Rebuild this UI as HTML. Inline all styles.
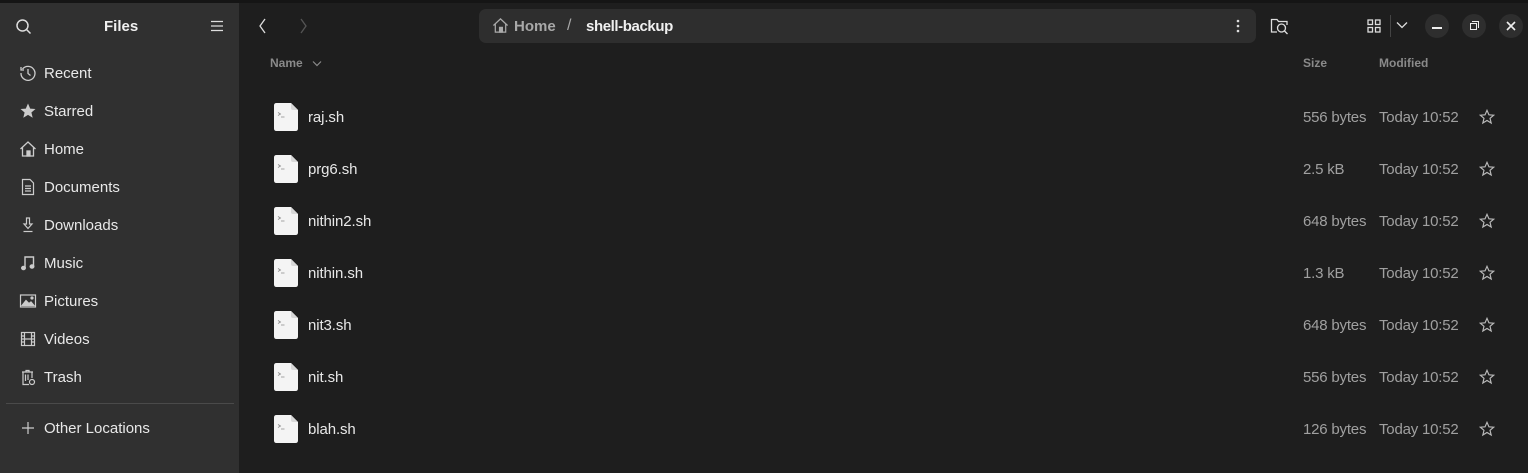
<!DOCTYPE html>
<html><head><meta charset="utf-8"><style>
*{margin:0;padding:0;box-sizing:border-box}
body{width:1528px;height:473px;overflow:hidden;background:#1e1e1e;font-family:"Liberation Sans",sans-serif;color:#fff;position:relative}
.top{position:absolute;left:0;top:0;width:1528px;height:3px;background:#151515}
.side{position:absolute;left:0;top:3px;width:239px;height:470px;background:#303030}
.abs{position:absolute}
.t{margin-top:1px}
.si{position:absolute;left:44px;font-size:15px;color:#e8e8e8;line-height:18px;margin-top:1px}
.ic{position:absolute;left:19px;width:18px;height:18px}
.row .name{position:absolute;left:308px;font-size:15px;color:#e8e8e8;letter-spacing:-0.1px}
.sz{position:absolute;left:1303px;font-size:15px;color:#a0a0a0;letter-spacing:-0.2px}
.md{position:absolute;left:1379px;font-size:15px;color:#a0a0a0;letter-spacing:-0.2px}
.fi{position:absolute;left:274px;width:24px;height:28px}
.st{position:absolute;left:1479px;width:16px;height:16px}
.wb{position:absolute;top:14px;width:24px;height:24px;border-radius:50%;background:#2e2e2e}
</style></head><body>
<div class="top"></div>
<div class="side"></div>
<svg class="abs" style="left:15px;top:18px" width="18" height="18" viewBox="0 0 18 18" fill="none" stroke="#ddd" stroke-width="1.5"><circle cx="7.5" cy="7.5" r="5.5"/><path d="M11.5 11.5L15.5 15.5"/></svg>
<div class="abs t" style="left:104px;top:17px;font-size:15px;font-weight:bold;color:#f0f0f0">Files</div>
<svg class="abs" style="left:210px;top:19px" width="14" height="14" viewBox="0 0 14 14" stroke="#ddd" stroke-width="1.3"><path d="M1 2.5H13M1 7H13M1 11.5H13"/></svg>

<svg class="ic" style="top:64px" viewBox="0 0 18 18" fill="none" stroke="#ccc" stroke-width="1.3"><path d="M3.5 5A7 7 0 1 1 2 9"/><path d="M2 3V6H5"/><path d="M9 5V9.5L11.5 11.5"/></svg>
<div class="si" style="top:64px">Recent</div>
<svg class="ic" style="top:102px" viewBox="0 0 18 18" fill="#ccc"><path d="M9 1.5L11.2 6.6 16.5 7 12.4 10.5 13.7 15.8 9 12.9 4.3 15.8 5.6 10.5 1.5 7 6.8 6.6Z"/></svg>
<div class="si" style="top:102px">Starred</div>
<svg class="ic" style="top:140px" viewBox="0 0 18 18" fill="none" stroke="#ccc" stroke-width="1.3"><path d="M1.5 9L9 2 16.5 9M3.5 7.5V16H14.5V7.5"/><rect x="8" y="11" width="3" height="5" fill="#ccc"/></svg>
<div class="si" style="top:140px">Home</div>
<svg class="ic" style="top:178px" viewBox="0 0 18 18" fill="none" stroke="#ccc" stroke-width="1.2"><path d="M3.5 1.5H11L14.5 5V16.5H3.5Z"/><path d="M6 8H12M6 10.5H12M6 13H12"/></svg>
<div class="si" style="top:178px">Documents</div>
<svg class="ic" style="top:216px" viewBox="0 0 18 18" fill="none" stroke="#ccc" stroke-width="1.2"><path d="M7.5 2H10.5V8H13L9 12.5 5 8H7.5Z"/><path d="M4.5 15.5H13.5"/></svg>
<div class="si" style="top:216px">Downloads</div>
<svg class="ic" style="top:254px" viewBox="0 0 18 18" fill="none" stroke="#ccc" stroke-width="1.4"><path d="M6 14V3H14.5V12"/><ellipse cx="4.5" cy="14" rx="1.8" ry="1.5" fill="#ccc"/><ellipse cx="13" cy="12.5" rx="1.8" ry="1.5" fill="#ccc"/></svg>
<div class="si" style="top:254px">Music</div>
<svg class="ic" style="top:292px" viewBox="0 0 18 18" fill="none" stroke="#ccc" stroke-width="1.2"><rect x="1.5" y="3" width="15" height="12"/><path d="M3 13.5L7 8.5 10 11.5 12 10 15 13.5Z" fill="#ccc"/><circle cx="13" cy="6" r="1" fill="#ccc"/></svg>
<div class="si" style="top:292px">Pictures</div>
<svg class="ic" style="top:330px" viewBox="0 0 18 18" fill="none" stroke="#ccc" stroke-width="1.2"><rect x="2.5" y="2.5" width="13" height="13"/><path d="M5.5 2.5V15.5M12.5 2.5V15.5M2.5 6H5.5M2.5 9H5.5M2.5 12H5.5M12.5 6H15.5M12.5 9H15.5M12.5 12H15.5M5.5 9H12.5"/></svg>
<div class="si" style="top:330px">Videos</div>
<svg class="ic" style="top:368px" viewBox="0 0 18 18" fill="none" stroke="#ccc" stroke-width="1.2"><path d="M3 4H14M7 4V2.5H10V4M4 4V16.5H10M13 4V10M6.5 6.5V13M9 6.5V12"/><circle cx="13" cy="14" r="2.5"/></svg>
<div class="si" style="top:368px">Trash</div>
<div class="abs" style="left:6px;top:403px;width:228px;height:1px;background:#4a4a4a"></div>
<svg class="ic" style="top:419px" viewBox="0 0 18 18" stroke="#ccc" stroke-width="1.2"><path d="M9 3V15M3 9H15"/></svg>
<div class="si" style="top:419px">Other Locations</div>

<svg class="abs" style="left:256px;top:17px" width="14" height="18" viewBox="0 0 14 18" fill="none" stroke="#ddd" stroke-width="1.3"><path d="M9 2L4 9 9 16"/></svg>
<svg class="abs" style="left:296px;top:17px" width="14" height="18" viewBox="0 0 14 18" fill="none" stroke="#555" stroke-width="1.3"><path d="M5 2L10 9 5 16"/></svg>
<div class="abs" style="left:479px;top:9px;width:777px;height:34px;border-radius:7px;background:#2e2e2e"></div>
<svg class="abs" style="left:492px;top:17px" width="17" height="17" viewBox="0 0 18 18" fill="none" stroke="#aaa" stroke-width="1.3"><path d="M1.5 9L9 2 16.5 9M3.5 7.5V16H14.5V7.5"/><rect x="8" y="11" width="3" height="5" fill="#aaa"/></svg>
<div class="abs t" style="left:514px;top:17px;font-size:15px;font-weight:bold;color:#a8a8a8">Home</div>
<div class="abs t" style="left:567px;top:16px;font-size:16px;color:#a8a8a8">/</div>
<div class="abs t" style="left:586px;top:17px;font-size:15px;font-weight:bold;color:#f0f0f0;letter-spacing:-0.4px">shell-backup</div>
<svg class="abs" style="left:1236px;top:19px" width="4" height="14" viewBox="0 0 4 14" fill="#ddd"><circle cx="2" cy="2" r="1.3"/><circle cx="2" cy="7" r="1.3"/><circle cx="2" cy="12" r="1.3"/></svg>
<svg class="abs" style="left:1270px;top:17px" width="19" height="18" viewBox="0 0 19 18" fill="none" stroke="#ddd" stroke-width="1.3"><path d="M7 15H1.5V2.5H7L8.5 4.5H17V8"/><circle cx="11.5" cy="11" r="4"/><path d="M14.5 14L17.5 17"/></svg>
<svg class="abs" style="left:1367px;top:19px" width="14" height="14" viewBox="0 0 14 14" fill="none" stroke="#ddd" stroke-width="1.3"><rect x="1" y="1" width="4.5" height="4.5"/><rect x="8.5" y="1" width="4.5" height="4.5"/><rect x="1" y="8.5" width="4.5" height="4.5"/><rect x="8.5" y="8.5" width="4.5" height="4.5"/></svg>
<div class="abs" style="left:1390px;top:15px;width:1px;height:22px;background:#444"></div>
<svg class="abs" style="left:1396px;top:21px" width="12" height="8" viewBox="0 0 12 8" fill="none" stroke="#ddd" stroke-width="1.3"><path d="M1 1.5L6 6.5 11 1.5"/></svg>
<div class="wb" style="left:1425px"></div>
<div class="abs" style="left:1432px;top:27px;width:10px;height:1.5px;background:#eee"></div>
<div class="wb" style="left:1462px"></div>
<div class="abs" style="left:1470px;top:23px;width:7px;height:7px;border:1.5px solid #eee"></div>
<div class="abs" style="left:1472px;top:21px;width:7px;height:7px;border-top:1.3px solid #eee;border-right:1.3px solid #eee"></div>
<div class="wb" style="left:1499px"></div>
<svg class="abs" style="left:1505px;top:20px" width="12" height="12" viewBox="0 0 12 12" stroke="#eee" stroke-width="1.6"><path d="M2 2L10 10M10 2L2 10"/></svg>

<div class="abs t" style="left:270px;top:55px;font-size:12px;font-weight:bold;color:#8a8a8a">Name</div>
<svg class="abs" style="left:312px;top:60px" width="10" height="7" viewBox="0 0 10 7" fill="none" stroke="#8a8a8a" stroke-width="1.2"><path d="M1 1.5L5 5.5 9 1.5"/></svg>
<div class="abs t" style="left:1303px;top:55px;font-size:12px;font-weight:bold;color:#8a8a8a">Size</div>
<div class="abs t" style="left:1379px;top:55px;font-size:12px;font-weight:bold;color:#8a8a8a">Modified</div>

<div id="rows"></div>
<script>
var d=[["raj.sh","556 bytes"],["prg6.sh","2.5 kB"],["nithin2.sh","648 bytes"],["nithin.sh","1.3 kB"],["nit3.sh","648 bytes"],["nit.sh","556 bytes"],["blah.sh","126 bytes"]];
var h="";
d.forEach(function(r,i){var c=117+52*i;
h+='<svg class="fi" style="top:'+(c-14)+'px" viewBox="0 0 24 28"><path d="M2.5 0H17L24 7V25.5Q24 28 21.5 28H2.5Q0 28 0 25.5V2.5Q0 0 2.5 0Z" fill="#f4f4f4"/><path d="M17 0V5Q17 7 19 7H24Z" fill="#d8d8d8"/><path d="M4 9.5L6.5 11 4 12.5M7 14H10.5" stroke="#888" stroke-width="0.8" fill="none"/></svg>';
h+='<div class="row"><div class="name" style="top:'+(c-8)+'px">'+r[0]+'</div></div>';
h+='<div class="sz" style="top:'+(c-8)+'px">'+r[1]+'</div>';
h+='<div class="md" style="top:'+(c-8)+'px">Today 10:52</div>';
h+='<svg class="st" style="top:'+(c-8)+'px" viewBox="0 0 18 18" fill="none" stroke="#bbb" stroke-width="1.3"><path d="M9 1.5L11.2 6.6 16.5 7 12.4 10.5 13.7 15.8 9 12.9 4.3 15.8 5.6 10.5 1.5 7 6.8 6.6Z"/></svg>';
});
document.getElementById("rows").innerHTML=h;
</script>
</body></html>
